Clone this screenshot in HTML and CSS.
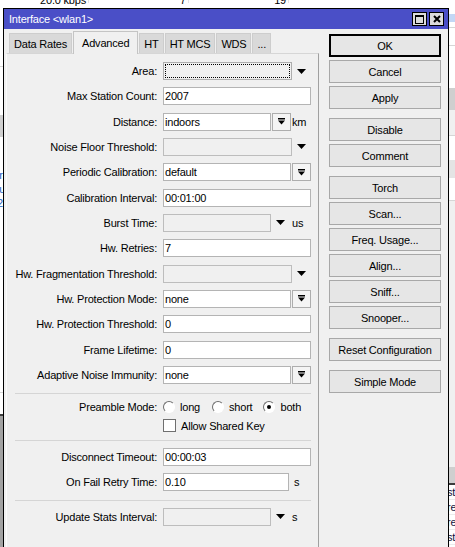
FILE: index.html
```html
<!DOCTYPE html>
<html lang="en">

<head>
    <meta charset="UTF-8">
    <meta name="viewport" content="width=device-width, initial-scale=1.0">
    <title>Interface &lt;wlan1&gt;</title>
    <link rel="stylesheet" href="styles.css">
</head>

<body>
    <div class="desk">
        <div class="desk-top">
            <span class="cell cell-a">20.0 kbps</span>
            <span class="cell cell-b">7</span>
            <span class="cell cell-c">19</span>
            <span class="cell cell-d"></span>
        </div>
        <div class="strip">
            <div class="band white h58"></div>
            <div class="band line"></div>
            <div class="band white h48"></div>
            <div class="band grey h22"></div>
            <div class="band white h31"></div>
            <div class="band frag"><span>ir</span></div>
            <div class="band frag"><span>lu</span></div>
            <div class="band frag"><span>2</span></div>
            <div class="band white h182"></div>
            <div class="band line"></div>
            <div class="band white h21"></div>
            <div class="band dark"></div>
            <div class="band mid fill"></div>
        </div>
        <div class="middle"></div>
        <div class="strip">
            <div class="band white h6"></div>
            <div class="band blue h8"></div>
            <div class="band white h5"></div>
            <div class="band line"></div>
            <div class="band white h17"></div>
            <div class="band line"></div>
            <div class="band white h42"></div>
            <div class="band grey h22"></div>
            <div class="band light h25"></div>
            <div class="band line"></div>
            <div class="band white h24"></div>
            <div class="band pale h18"></div>
            <div class="band white h22"></div>
            <div class="band line"></div>
            <div class="band light h266"></div>
            <div class="band grey h16"></div>
            <div class="band dark"></div>
            <div class="band list-row"><span>st</span></div>
            <div class="band list-row"><span>re</span></div>
            <div class="band list-row"><span>re</span></div>
            <div class="band list-row"><span>st</span></div>
            <div class="band list-row"><span>re</span></div>
        </div>
    </div>

    <div class="window">
        <div class="titlebar">
            <span class="title">Interface &lt;wlan1&gt;</span>
            <div class="tb-buttons">
                <span class="tb-btn">
                    <svg width="9" height="9" viewBox="0 0 9 9"><rect x="0.5" y="0.5" width="8" height="8" fill="none" stroke="#000"/><rect x="0" y="0" width="9" height="2" fill="#000"/></svg>
                </span>
                <span class="tb-btn">
                    <svg width="8" height="8" viewBox="0 0 8 8"><path d="M1 1 L7 7 M7 1 L1 7" stroke="#000" stroke-width="2"/></svg>
                </span>
            </div>
        </div>

        <div class="win-body">
            <div class="tabs-area">
                <div class="tabs">
                    <span class="tab">Data Rates</span>
                    <span class="tab active">Advanced</span>
                    <span class="tab">HT</span>
                    <span class="tab">HT MCS</span>
                    <span class="tab">WDS</span>
                    <span class="tab">...</span>
                </div>

                <div class="panel">
                    <div class="group">
                        <div class="row">
                            <span class="lbl">Area:</span>
                            <span class="box focus w-box"></span>
                            <span class="drop"><svg width="9" height="5" viewBox="0 0 9 5"><polygon points="0,0 9,0 4.5,5"/></svg></span>
                        </div>
                        <div class="row">
                            <span class="lbl">Max Station Count:</span>
                            <span class="input w-full">2007</span>
                        </div>
                        <div class="row">
                            <span class="lbl">Distance:</span>
                            <span class="input w-short">indoors</span>
                            <span class="spin"><svg width="7" height="7" viewBox="0 0 7 7"><rect x="0" y="0" width="7" height="1.5"/><polygon points="0,2.5 7,2.5 3.5,6.5"/></svg></span>
                            <span class="unit">km</span>
                        </div>
                        <div class="row">
                            <span class="lbl">Noise Floor Threshold:</span>
                            <span class="box w-box"></span>
                            <span class="drop"><svg width="9" height="5" viewBox="0 0 9 5"><polygon points="0,0 9,0 4.5,5"/></svg></span>
                        </div>
                        <div class="row">
                            <span class="lbl">Periodic Calibration:</span>
                            <span class="input w-mid">default</span>
                            <span class="spin"><svg width="7" height="7" viewBox="0 0 7 7"><rect x="0" y="0" width="7" height="1.5"/><polygon points="0,2.5 7,2.5 3.5,6.5"/></svg></span>
                        </div>
                        <div class="row">
                            <span class="lbl">Calibration Interval:</span>
                            <span class="input w-full">00:01:00</span>
                        </div>
                        <div class="row">
                            <span class="lbl">Burst Time:</span>
                            <span class="box w-short"></span>
                            <span class="drop"><svg width="9" height="5" viewBox="0 0 9 5"><polygon points="0,0 9,0 4.5,5"/></svg></span>
                            <span class="unit wide">us</span>
                        </div>
                        <div class="row">
                            <span class="lbl">Hw. Retries:</span>
                            <span class="input w-full">7</span>
                        </div>
                        <div class="row">
                            <span class="lbl">Hw. Fragmentation Threshold:</span>
                            <span class="box w-box"></span>
                            <span class="drop"><svg width="9" height="5" viewBox="0 0 9 5"><polygon points="0,0 9,0 4.5,5"/></svg></span>
                        </div>
                        <div class="row">
                            <span class="lbl">Hw. Protection Mode:</span>
                            <span class="input w-mid">none</span>
                            <span class="spin"><svg width="7" height="7" viewBox="0 0 7 7"><rect x="0" y="0" width="7" height="1.5"/><polygon points="0,2.5 7,2.5 3.5,6.5"/></svg></span>
                        </div>
                        <div class="row">
                            <span class="lbl">Hw. Protection Threshold:</span>
                            <span class="input w-full">0</span>
                        </div>
                        <div class="row">
                            <span class="lbl">Frame Lifetime:</span>
                            <span class="input w-full">0</span>
                        </div>
                        <div class="row">
                            <span class="lbl">Adaptive Noise Immunity:</span>
                            <span class="input w-mid">none</span>
                            <span class="spin"><svg width="7" height="7" viewBox="0 0 7 7"><rect x="0" y="0" width="7" height="1.5"/><polygon points="0,2.5 7,2.5 3.5,6.5"/></svg></span>
                        </div>
                    </div>

                    <div class="sep sep-first"></div>

                    <div class="group group-options">
                        <div class="row">
                            <span class="lbl">Preamble Mode:</span>
                            <span class="radio-opt"><span class="radio"></span><span class="opt-text">long</span></span>
                            <span class="radio-opt"><span class="radio"></span><span class="opt-text">short</span></span>
                            <span class="radio-opt"><span class="radio checked"></span><span class="opt-text">both</span></span>
                        </div>
                        <div class="row">
                            <span class="lbl"></span>
                            <span class="check"></span>
                            <span class="opt-text">Allow Shared Key</span>
                        </div>
                    </div>

                    <div class="sep sep-second"></div>

                    <div class="group group-tight">
                        <div class="row">
                            <span class="lbl">Disconnect Timeout:</span>
                            <span class="input w-full">00:00:03</span>
                        </div>
                        <div class="row">
                            <span class="lbl">On Fail Retry Time:</span>
                            <span class="input w-fail">0.10</span>
                            <span class="unit far">s</span>
                        </div>
                    </div>

                    <div class="sep"></div>

                    <div class="group">
                        <div class="row">
                            <span class="lbl">Update Stats Interval:</span>
                            <span class="box w-short"></span>
                            <span class="drop"><svg width="9" height="5" viewBox="0 0 9 5"><polygon points="0,0 9,0 4.5,5"/></svg></span>
                            <span class="unit wide">s</span>
                        </div>
                    </div>
                </div>
            </div>

            <div class="actions">
                <div class="btn-group">
                    <span class="btn default">OK</span>
                    <span class="btn">Cancel</span>
                    <span class="btn">Apply</span>
                </div>
                <div class="btn-group">
                    <span class="btn">Disable</span>
                    <span class="btn">Comment</span>
                </div>
                <div class="btn-group">
                    <span class="btn">Torch</span>
                    <span class="btn">Scan...</span>
                    <span class="btn">Freq. Usage...</span>
                    <span class="btn">Align...</span>
                    <span class="btn">Sniff...</span>
                    <span class="btn">Snooper...</span>
                </div>
                <div class="btn-group">
                    <span class="btn">Reset Configuration</span>
                </div>
                <div class="btn-group">
                    <span class="btn">Simple Mode</span>
                </div>
            </div>
        </div>
    </div>
</body>

</html>
```

FILE: styles.css
```css
* {
    box-sizing: border-box;
}

html,
body {
    margin: 0;
    padding: 0;
}

body {
    width: 455px;
    height: 547px;
    overflow: hidden;
    position: relative;
    font-family: "Liberation Sans", Arial, sans-serif;
    font-size: 11px;
    letter-spacing: -0.2px;
    color: #000;
    background: #fff;
}

/* list window behind the dialog */
.desk {
    display: grid;
    grid-template-columns: 3px 446px 6px;
    grid-template-rows: 8px 539px;
    height: 547px;
}

.desk-top {
    grid-column: 1 / -1;
    display: flex;
    overflow: hidden;
    background: #fff;
}

.cell {
    display: block;
    height: 8px;
    line-height: 11px;
    margin-top: -5px;
    padding-right: 2px;
    text-align: right;
    border-right: 1px solid #e3e3e3;
    color: #000;
}

.cell-a {
    width: 89px;
}

.cell-b {
    width: 100px;
}

.cell-c {
    width: 100px;
}

.cell-d {
    flex: 1;
    border-right: none;
}

.strip {
    display: flex;
    flex-direction: column;
    overflow: hidden;
}

.band {
    flex: none;
}

.white {
    background: #fff;
}

.grey {
    background: #cfcfcf;
}

.light {
    background: #f0f0f0;
}

.pale {
    background: #e4e4e4;
}

.blue {
    background: #c3d7f5;
}

.line {
    height: 1px;
    background: #d6d6d6;
}

.dark {
    height: 2px;
    background: #3c3c3c;
}

.mid {
    background: #a2a2a2;
}

.fill {
    flex: 1;
}

.frag,
.list-row {
    height: 14px;
    line-height: 14px;
    background: #fff;
    white-space: nowrap;
    overflow: hidden;
}

.frag span {
    margin-left: -3px;
    color: #1a5fc0;
}

.list-row {
    height: 15px;
    border-bottom: 1px solid #ececec;
}

.list-row span {
    margin-left: -2px;
    color: #101040;
}

.h5 { height: 5px; }
.h6 { height: 6px; }
.h8 { height: 8px; }
.h16 { height: 16px; }
.h17 { height: 17px; }
.h18 { height: 18px; }
.h21 { height: 21px; }
.h22 { height: 22px; }
.h24 { height: 24px; }
.h25 { height: 25px; }
.h31 { height: 31px; }
.h42 { height: 42px; }
.h48 { height: 48px; }
.h58 { height: 58px; }
.h182 { height: 182px; }
.h266 { height: 266px; }

/* dialog window */
.window {
    position: absolute;
    left: 3px;
    top: 8px;
    width: 446px;
    height: 545px;
    border: 1px solid #000;
    border-bottom: none;
    background: #f0f0f0;
}

.titlebar {
    height: 20px;
    display: flex;
    align-items: center;
    justify-content: space-between;
    padding: 0 4px 0 5px;
    background: #4a4fc7;
    color: #fff;
}

.tb-buttons {
    display: flex;
    gap: 2px;
}

.tb-btn {
    width: 15px;
    height: 14px;
    display: flex;
    align-items: center;
    justify-content: center;
    background: #dcdcdc;
    border: 1px solid #000;
}

.win-body {
    display: flex;
    align-items: flex-start;
    padding: 2px 0 0 2px;
}

.tabs-area {
    width: 313px;
    flex: none;
}

.tabs {
    display: flex;
    align-items: flex-end;
    height: 22px;
    padding-left: 3px;
}

.tab {
    height: 20px;
    display: flex;
    align-items: center;
    padding: 0 4px;
    margin-right: 1px;
    background: #d9d9d9;
    border: 1px solid #cdcdcd;
    border-bottom: none;
    white-space: nowrap;
}

.tab.active {
    height: 23px;
    margin-bottom: -1px;
    padding: 0 8px;
    background: #f0f0f0;
    border-color: #c4c4c4;
    position: relative;
    z-index: 1;
}

.panel {
    height: 500px;
    padding-top: 8px;
    border-top: 1px solid #d6d6d6;
    border-left: 1px solid #fbfbfb;
    border-right: 1px solid #a0a0a0;
}

.group {
    display: flex;
    flex-direction: column;
    gap: 7.33px;
}

.group-options {
    gap: 1px;
}

.group-tight {
    gap: 7px;
}

.sep {
    height: 1px;
    margin: 9px 7px 7px 8px;
    background: #d5d5d5;
}

.sep-first {
    margin-bottom: 4px;
}

.sep-second {
    margin-top: 5px;
}

.row {
    display: flex;
    align-items: center;
    height: 18px;
}

.lbl {
    width: 150px;
    flex: none;
    margin-right: 6px;
    text-align: right;
    white-space: nowrap;
}

.input {
    height: 18px;
    flex: none;
    padding: 0 1px;
    line-height: 16px;
    background: #fff;
    border: 1px solid #b4b4b4;
    white-space: nowrap;
}

.box {
    height: 18px;
    flex: none;
    background: #f0f0f0;
    border: 1px solid #bdbdbd;
}

.box.focus {
    border-color: #adadad;
    outline: 1px dotted #000;
    outline-offset: -3px;
}

.w-full { width: 148px; }
.w-mid { width: 128px; }
.w-box { width: 129px; }
.w-short { width: 108px; }
.w-fail { width: 126px; }

.drop {
    width: 19px;
    height: 18px;
    flex: none;
    display: flex;
    align-items: center;
    justify-content: center;
}

.spin {
    width: 19px;
    height: 18px;
    flex: none;
    margin-left: 1px;
    display: flex;
    align-items: center;
    justify-content: center;
    background: #f4f4f4;
    border: 1px solid #adadad;
}

.unit {
    margin-left: 1px;
}

.unit.wide {
    margin-left: 2px;
}

.unit.far {
    margin-left: 5px;
}

.radio-opt {
    display: flex;
    align-items: center;
    margin-right: 11px;
}

.radio-opt:first-of-type {
    margin-left: 1px;
}

.radio-opt:nth-of-type(3) {
    margin-left: 1px;
}

.radio {
    width: 12px;
    height: 12px;
    flex: none;
    display: flex;
    align-items: center;
    justify-content: center;
    border-radius: 50%;
    background: #fff;
    border: 1px solid;
    border-color: #6e6e6e #fff #fff #6e6e6e;
}

.radio.checked::after {
    content: "";
    width: 4px;
    height: 4px;
    border-radius: 50%;
    background: #000;
}

.opt-text {
    margin-left: 5px;
    white-space: nowrap;
}

.check {
    width: 13px;
    height: 13px;
    flex: none;
    background: #fff;
    border: 1px solid #6f6f6f;
}

/* button column */
.actions {
    width: 112px;
    flex: none;
    margin: 3px 0 0 10px;
    display: flex;
    flex-direction: column;
    gap: 9px;
}

.btn-group {
    display: flex;
    flex-direction: column;
    gap: 3px;
}

.btn {
    height: 23px;
    display: flex;
    align-items: center;
    justify-content: center;
    background: #e6e6e6;
    border: 1px solid #a8a8a8;
    white-space: nowrap;
}

.btn.default {
    border: 2px solid #000;
}
```
